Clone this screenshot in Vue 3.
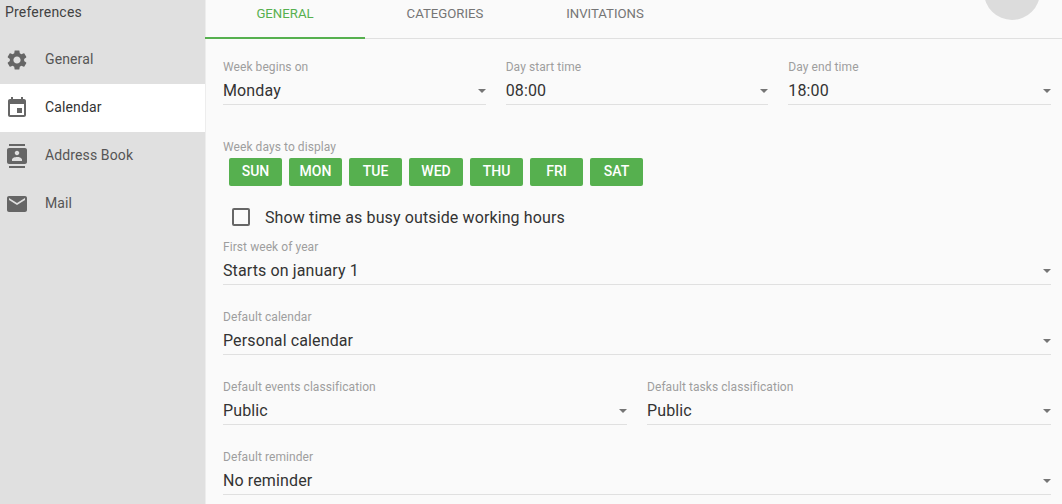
<template>
  <div class="page">
    <aside class="sidebar">
      <div class="sidebar-title">Preferences</div>
      <div
        v-for="item in menu"
        :key="item.label"
        class="menu-item"
        :class="{ active: item.active }"
      >
        <svg class="menu-icon" viewBox="0 0 24 24"><path :d="item.icon" /></svg>
        <span class="menu-label">{{ item.label }}</span>
      </div>
    </aside>

    <main class="content">
      <div class="tabs">
        <div
          v-for="(tab, i) in tabs"
          :key="tab"
          class="tab"
          :class="{ active: i === 0 }"
        >{{ tab }}</div>
      </div>
      <div class="fab"></div>

      <form class="form">
        <div class="row">
          <div v-for="f in timeFields" :key="f.label" class="field">
            <label class="field-label">{{ f.label }}</label>
            <div class="field-value">
              <span>{{ f.value }}</span>
              <i class="arrow"></i>
            </div>
          </div>
        </div>

        <div class="days-label">Week days to display</div>
        <div class="days">
          <button v-for="d in days" :key="d" type="button" class="day">{{ d }}</button>
        </div>

        <div class="check-row">
          <span class="checkbox"></span>
          <span class="check-label">Show time as busy outside working hours</span>
        </div>

        <div class="stack">
          <div class="row">
            <div class="field">
              <label class="field-label">First week of year</label>
              <div class="field-value"><span>Starts on january 1</span><i class="arrow"></i></div>
            </div>
          </div>
          <div class="row">
            <div class="field">
              <label class="field-label">Default calendar</label>
              <div class="field-value"><span>Personal calendar</span><i class="arrow"></i></div>
            </div>
          </div>
          <div class="row">
            <div class="field">
              <label class="field-label">Default events classification</label>
              <div class="field-value"><span>Public</span><i class="arrow"></i></div>
            </div>
            <div class="field">
              <label class="field-label">Default tasks classification</label>
              <div class="field-value"><span>Public</span><i class="arrow"></i></div>
            </div>
          </div>
          <div class="row">
            <div class="field">
              <label class="field-label">Default reminder</label>
              <div class="field-value"><span>No reminder</span><i class="arrow"></i></div>
            </div>
          </div>
        </div>
      </form>
    </main>
  </div>
</template>

<script setup>
const menu = [
  {
    label: 'General',
    icon: 'M19.14 12.94c.04-.3.06-.61.06-.94 0-.32-.02-.64-.07-.94l2.03-1.58c.18-.14.23-.41.12-.61l-1.92-3.32c-.12-.22-.37-.29-.59-.22l-2.39.96c-.5-.38-1.03-.7-1.62-.94l-.36-2.54c-.04-.24-.24-.41-.48-.41h-3.84c-.24 0-.43.17-.47.41l-.36 2.54c-.59.24-1.13.57-1.62.94l-2.39-.96c-.22-.08-.47 0-.59.22L2.74 8.87c-.12.21-.08.47.12.61l2.03 1.58c-.05.3-.09.63-.09.94s.02.64.07.94l-2.03 1.58c-.18.14-.23.41-.12.61l1.92 3.32c.12.22.37.29.59.22l2.39-.96c.5.38 1.03.7 1.62.94l.36 2.54c.05.24.24.41.48.41h3.84c.24 0 .44-.17.47-.41l.36-2.54c.59-.24 1.13-.56 1.62-.94l2.39.96c.22.08.47 0 .59-.22l1.92-3.32c.12-.22.07-.47-.12-.61l-2.01-1.58zM12 15.6c-1.98 0-3.6-1.62-3.6-3.6s1.62-3.6 3.6-3.6 3.6 1.62 3.6 3.6-1.62 3.6-3.6 3.6z'
  },
  {
    label: 'Calendar',
    active: true,
    icon: 'M17 12h-5v5h5v-5zM16 1v2H8V1H6v2H5c-1.11 0-1.99.9-1.99 2L3 19c0 1.1.89 2 2 2h14c1.1 0 2-.9 2-2V5c0-1.1-.9-2-2-2h-1V1h-2zm3 18H5V8h14v11z'
  },
  {
    label: 'Address Book',
    icon: 'M20 0H4v2h16V0zM4 24h16v-2H4v2zM20 4H4c-1.1 0-2 .9-2 2v12c0 1.1.9 2 2 2h16c1.1 0 2-.9 2-2V6c0-1.1-.9-2-2-2zm-8 2.75c1.24 0 2.25 1.01 2.25 2.25s-1.01 2.25-2.25 2.25S9.75 10.24 9.75 9 10.76 6.75 12 6.75zM17 17H7v-1.5c0-1.67 3.33-2.5 5-2.5s5 .83 5 2.5V17z'
  },
  {
    label: 'Mail',
    icon: 'M20 4H4c-1.1 0-1.99.9-1.99 2L2 18c0 1.1.9 2 2 2h16c1.1 0 2-.9 2-2V6c0-1.1-.9-2-2-2zm0 4l-8 5-8-5V6l8 5 8-5v2z'
  }
]

const tabs = ['GENERAL', 'CATEGORIES', 'INVITATIONS']

const timeFields = [
  { label: 'Week begins on', value: 'Monday' },
  { label: 'Day start time', value: '08:00' },
  { label: 'Day end time', value: '18:00' }
]

const days = ['SUN', 'MON', 'TUE', 'WED', 'THU', 'FRI', 'SAT']
</script>

<style>
html, body {
  margin: 0;
  overflow: hidden;
}
</style>

<style scoped>
.page {
  display: flex;
  width: 1062px;
  height: 504px;
  overflow: hidden;
  font-family: Roboto, "Noto Sans", sans-serif;
  background: #fafafa;
}

.sidebar {
  width: 205px;
  flex: none;
  background: #e0e0e0;
}

.sidebar-title {
  height: 36px;
  padding: 3px 0 0 5px;
  box-sizing: border-box;
  font-size: 14px;
  line-height: 18px;
  letter-spacing: 0.2px;
  color: #424242;
}

.menu-item {
  display: flex;
  align-items: center;
  height: 48px;
  padding-left: 5px;
  color: #555;
}

.menu-item.active {
  background: #fff;
  color: #333;
}

.menu-icon {
  width: 24px;
  height: 24px;
  fill: #666;
}

.menu-label {
  margin-left: 16px;
  font-size: 14px;
  letter-spacing: 0.12px;
  position: relative;
  top: -1px;
}

.content {
  flex: 1;
  position: relative;
  box-shadow: inset 1px 0 0 #ededed;
}

.tabs {
  display: flex;
  height: 39px;
  box-sizing: border-box;
  border-bottom: 1px solid #e0e0e0;
}

.tab {
  width: 160px;
  height: 39px;
  box-sizing: border-box;
  padding-top: 5px;
  text-align: center;
  font-size: 13.2px;
  line-height: 18px;
  color: #757575;
}

.tab.active {
  color: #56b04f;
  border-bottom: 2px solid #56b04f;
}

.fab {
  position: absolute;
  top: -36px;
  right: 22px;
  width: 56px;
  height: 56px;
  border-radius: 50%;
  background: #dcdcdc;
}

.form {
  padding: 20px 11px 0 18px;
}

.row {
  display: flex;
  gap: 20px;
}

.field {
  flex: 1;
  min-width: 0;
}

.field-label,
.days-label {
  display: block;
  font-size: 12px;
  line-height: 16px;
  letter-spacing: 0.07px;
  color: #9e9e9e;
}

.field-value {
  display: flex;
  justify-content: space-between;
  align-items: center;
  height: 27px;
  padding-top: 2px;
  border-bottom: 1px solid #e0e0e0;
  font-size: 16px;
  letter-spacing: 0.12px;
  color: #333;
}

.arrow {
  width: 0;
  height: 0;
  border-left: 4.5px solid transparent;
  border-right: 4.5px solid transparent;
  border-top: 4.5px solid #757575;
}

.days-label {
  margin-top: 34px;
}

.days {
  display: flex;
  gap: 7px;
  margin: 3px 0 0 6px;
}

.day {
  width: 53px;
  height: 28px;
  padding: 0 0 2px;
  border: none;
  border-radius: 2px;
  background: #56b04f;
  color: #fff;
  font-family: inherit;
  font-size: 14px;
  font-weight: 500;
}

.day:nth-child(4) {
  width: 54px;
}

.check-row {
  display: flex;
  align-items: center;
  height: 24px;
  margin: 19px 0 0 9px;
}

.checkbox {
  width: 18px;
  height: 18px;
  box-sizing: border-box;
  border: 2px solid #666;
  border-radius: 2px;
}

.check-label {
  margin-left: 15px;
  font-size: 16px;
  letter-spacing: 0.12px;
  color: #333;
}

.stack {
  display: flex;
  flex-direction: column;
  gap: 24px;
  margin-top: 10px;
}
</style>
